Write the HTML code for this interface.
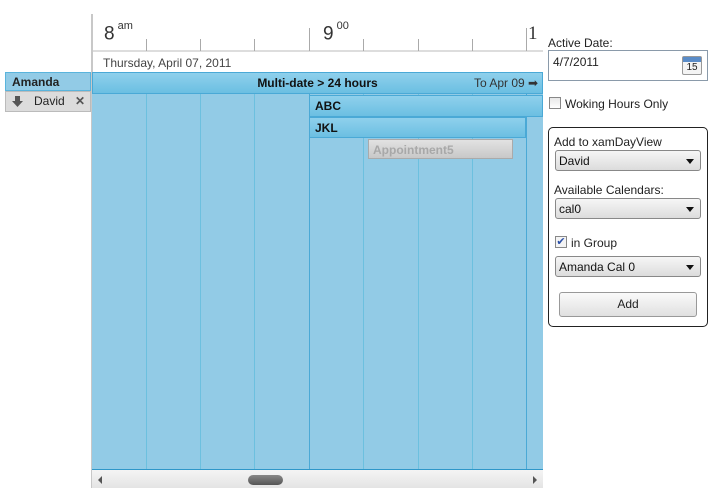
<!DOCTYPE html>
<html><head><style>
body{margin:0;width:715px;height:500px;background:#fff;font-family:"Liberation Sans",sans-serif;position:relative;overflow:hidden;font-size:12px;color:#222}
.a{position:absolute}
.vl{position:absolute;width:1px;background:#6cc0df}
.tk{position:absolute;width:1px;background:#aaa}
.bar{position:absolute;background:linear-gradient(#8fd0ec,#6bbfe2);border:1px solid #4aa9d6;box-sizing:border-box;font-weight:bold;font-size:12px;color:#111}
.dd{position:absolute;left:555px;width:146px;height:21px;box-sizing:border-box;border:1px solid #888;border-radius:3px;background:linear-gradient(#f6f6f6,#dcdcdc);font-size:12px;padding:3px 3px;color:#111}
.dd:after{content:"";position:absolute;right:6px;top:8px;border-left:4px solid transparent;border-right:4px solid transparent;border-top:5px solid #111}
</style></head><body>
<div class="a" style="left:91px;top:14px;width:2px;height:474px;background:#c8c8c8"></div>
<div class="a" style="left:93px;top:50px;width:450px;height:2px;background:#ddd"></div>
<div class="a" style="left:104px;top:23px;font-size:19px;color:#333">8<sup style="font-size:11px;position:relative;top:-3px"> am</sup></div>
<div class="a" style="left:323px;top:23px;font-size:19px;color:#333">9<sup style="font-size:11px;position:relative;top:-3px"> 00</sup></div>
<div class="a" style="left:528px;top:23px;font-size:19px;color:#333;font-family:'Liberation Serif',serif">1</div>
<div class="tk" style="left:146px;top:39px;height:12px"></div>
<div class="tk" style="left:200px;top:39px;height:12px"></div>
<div class="tk" style="left:254px;top:39px;height:12px"></div>
<div class="tk" style="left:309px;top:28px;height:23px"></div>
<div class="tk" style="left:363px;top:39px;height:12px"></div>
<div class="tk" style="left:418px;top:39px;height:12px"></div>
<div class="tk" style="left:472px;top:39px;height:12px"></div>
<div class="tk" style="left:526px;top:28px;height:23px"></div>
<div class="a" style="left:103px;top:56px;font-size:12px;color:#444">Thursday, April 07, 2011</div>
<div class="a" style="left:92px;top:72px;width:451px;height:398px;background:#92cbe6"></div>
<div class="vl" style="left:146px;top:94px;height:376px"></div>
<div class="vl" style="left:200px;top:94px;height:376px"></div>
<div class="vl" style="left:254px;top:94px;height:376px"></div>
<div class="vl" style="left:309px;top:94px;height:376px;background:#4aa9d6"></div>
<div class="vl" style="left:363px;top:94px;height:376px"></div>
<div class="vl" style="left:418px;top:94px;height:376px"></div>
<div class="vl" style="left:472px;top:94px;height:376px"></div>
<div class="vl" style="left:526px;top:94px;height:376px;background:#4aa9d6"></div>
<div class="a" style="left:92px;top:469px;width:451px;height:1px;background:#2e97c9"></div>
<div class="bar" style="left:92px;top:72px;width:451px;height:22px;text-align:center;line-height:20px">Multi-date &gt; 24 hours</div>
<div class="a" style="left:474px;top:76px;font-size:12px;color:#333">To Apr 09 ➡</div>
<div class="bar" style="left:309px;top:95px;width:234px;height:22px;padding:3px 5px">ABC</div>
<div class="bar" style="left:309px;top:117px;width:217px;height:21px;padding:3px 5px">JKL</div>
<div class="a" style="left:368px;top:139px;width:145px;height:20px;box-sizing:border-box;border:1px solid #aaa;background:linear-gradient(#e2e2e2,#c8c8c8);font-weight:bold;color:#a8a8a8;padding:3px 4px">Appointment5</div>
<div class="a" style="left:5px;top:72px;width:86px;height:19px;box-sizing:border-box;background:#92cbe6;border:1px solid #5ab4dc;font-weight:bold;padding:2px 6px">Amanda</div>
<div class="a" style="left:5px;top:91px;width:86px;height:21px;box-sizing:border-box;background:#dcdcdc;border:1px solid #bbb;color:#222">
<svg class="a" style="left:6px;top:4px" width="11" height="11"><path d="M3 0h5v5h3l-5.5 6L0 5h3z" fill="#555"/></svg>
<span class="a" style="left:28px;top:2px">David</span><span class="a" style="right:5px;top:2px;font-weight:bold;color:#555">✕</span></div>
<div class="a" style="left:92px;top:470px;width:451px;height:18px;background:linear-gradient(#f4f4f4,#e4e4e4)"></div>
<div class="a" style="left:98px;top:476px;border-top:4px solid transparent;border-bottom:4px solid transparent;border-right:4px solid #555"></div>
<div class="a" style="left:533px;top:476px;border-top:4px solid transparent;border-bottom:4px solid transparent;border-left:4px solid #555"></div>
<div class="a" style="left:248px;top:475px;width:35px;height:10px;border-radius:5px;background:linear-gradient(#888,#555)"></div>
<div class="a" style="left:548px;top:36px;font-size:12px">Active Date:</div>
<div class="a" style="left:548px;top:50px;width:160px;height:31px;box-sizing:border-box;border:1px solid #8a9aaa;padding:4px 4px;font-size:12px">4/7/2011
<div class="a" style="left:133px;top:5px;width:20px;height:19px;border:1px solid #999;border-radius:2px;background:#f4f4f4;font-size:10px;text-align:center;line-height:22px;box-sizing:border-box"><div style="position:absolute;left:0;top:0;width:18px;height:5px;background:#5a8cc8"></div>15</div></div>
<div class="a" style="left:549px;top:97px;width:12px;height:12px;box-sizing:border-box;border:1px solid #888;background:linear-gradient(#e8e8e8,#fff)"></div>
<div class="a" style="left:565px;top:97px;font-size:12px">Woking Hours Only</div>
<div class="a" style="left:548px;top:127px;width:160px;height:200px;box-sizing:border-box;border:1px solid #222;border-radius:5px"></div>
<div class="a" style="left:554px;top:135px">Add to xamDayView</div>
<div class="dd" style="top:150px">David</div>
<div class="a" style="left:554px;top:183px">Available Calendars:</div>
<div class="dd" style="top:198px">cal0</div>
<div class="a" style="left:555px;top:236px;width:12px;height:12px;box-sizing:border-box;border:1px solid #888;background:#f4f4f4;color:#2a4fa8;font-size:11px;line-height:10px;text-align:center">✔</div>
<div class="a" style="left:571px;top:236px">in Group</div>
<div class="dd" style="top:256px">Amanda Cal 0</div>
<div class="a" style="left:559px;top:292px;width:138px;height:25px;box-sizing:border-box;border:1px solid #999;border-radius:3px;background:linear-gradient(#fafafa,#e0e0e0);text-align:center;line-height:23px">Add</div>
</body></html>
